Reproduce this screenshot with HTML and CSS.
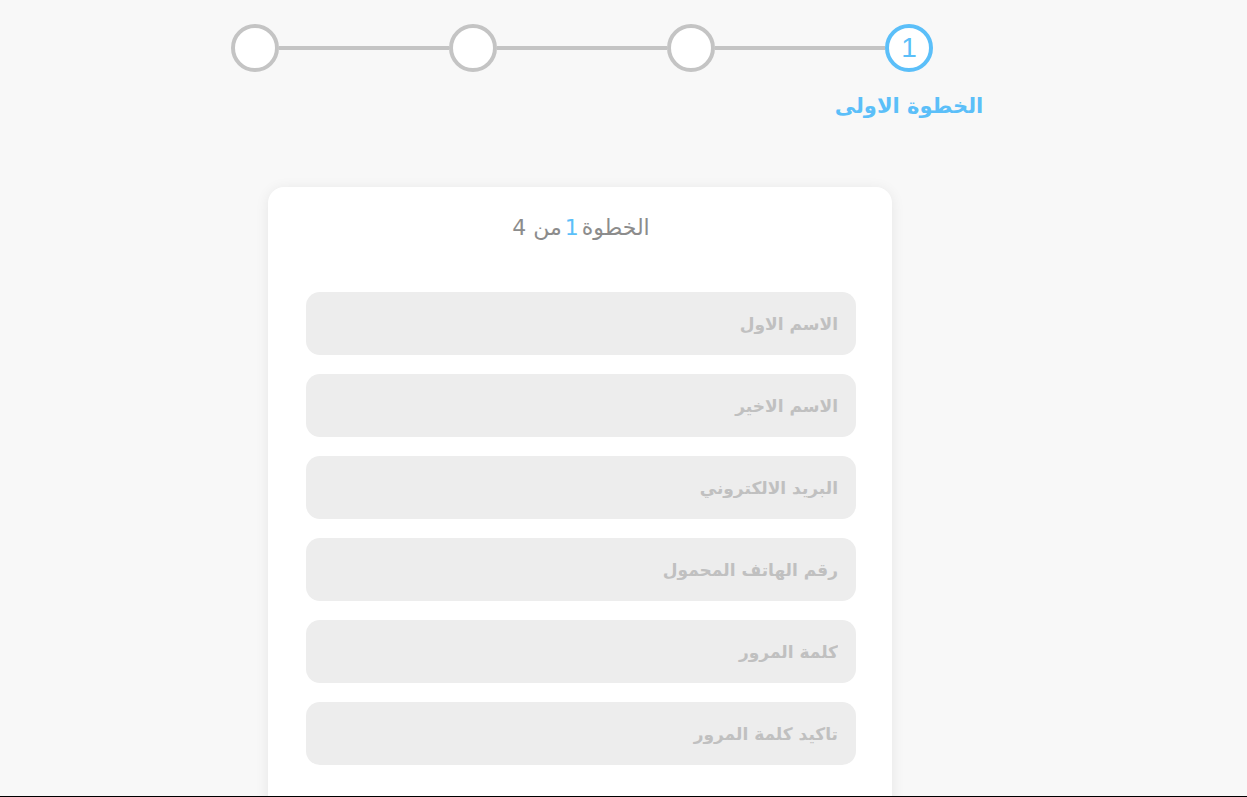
FILE: index.html
```html
<!DOCTYPE html>
<html lang="ar" dir="rtl">
<head>
<meta charset="utf-8">
<title>التسجيل</title>
<link rel="stylesheet" href="styles.css">
</head>
<body>
<div class="page">
  <div class="stepper">
    <div class="step active">
      <div class="circle">1</div>
      <div class="step-label">الخطوة الاولى</div>
    </div>
    <div class="line"></div>
    <div class="step"><div class="circle"></div></div>
    <div class="line"></div>
    <div class="step"><div class="circle"></div></div>
    <div class="line"></div>
    <div class="step"><div class="circle"></div></div>
  </div>

  <div class="card">
    <h2 class="card-title">الخطوة<span class="num">1</span>من 4</h2>
    <form class="form">
      <input class="field" type="text" placeholder="الاسم الاول">
      <input class="field" type="text" placeholder="الاسم الاخير">
      <input class="field" type="email" placeholder="البريد الالكتروني">
      <input class="field" type="tel" placeholder="رقم الهاتف المحمول">
      <input class="field" type="password" placeholder="كلمة المرور">
      <input class="field" type="password" placeholder="تاكيد كلمة المرور">
    </form>
  </div>
</div>
</body>
</html>
```

FILE: styles.css
```css
* { box-sizing: border-box; }
html, body {
  margin: 0;
  padding: 0;
}
body {
  background: #f8f8f8;
  font-family: "DejaVu Sans", "Noto Sans", sans-serif;
  height: 797px;
  overflow: hidden;
  border-bottom: 1px solid #000;
}
.page {
  display: flex;
  flex-direction: column;
  align-items: center;
  margin-right: 87px;
  padding-top: 24px;
}
.stepper {
  display: flex;
  align-items: flex-start;
  width: 702px;
  margin-left: 4px;
}
.step {
  width: 48px;
  display: flex;
  flex-direction: column;
  align-items: center;
  flex: none;
}
.circle {
  width: 48px;
  height: 48px;
  border-radius: 50%;
  border: 4px solid #c4c4c4;
  background: #fff;
  display: flex;
  align-items: center;
  justify-content: center;
  font-family: "Liberation Sans", sans-serif;
  font-size: 28px;
  color: #5bbff9;
}
.step.active .circle {
  border-color: #5bbff9;
}
.line {
  flex: 1;
  height: 4px;
  background: #c4c4c4;
  margin-top: 22px;
}
.step-label {
  white-space: nowrap;
  margin-top: 22px;
  font-size: 21px;
  font-weight: bold;
  color: #5bbff9;
  line-height: 24px;
}
.card {
  margin-top: 69px;
  width: 624px;
  background: #fff;
  border-radius: 16px 16px 0 0;
  box-shadow: 0 2px 14px rgba(0, 0, 0, 0.08);
  padding: 25px 36px 40px 38px;
}
.card-title {
  margin: 0;
  text-align: center;
  font-weight: normal;
  font-size: 22px;
  line-height: 32px;
  color: #8c8c8c;
}
.card-title .num {
  color: #5bbff9;
  margin: 0 3px;
}
.form {
  margin-top: 48px;
  display: flex;
  flex-direction: column;
  gap: 19px;
}
.field {
  width: 100%;
  height: 63px;
  border: none;
  outline: none;
  border-radius: 14px;
  background: #ededed;
  padding: 0 18px;
  font-family: "DejaVu Sans", sans-serif;
  font-size: 17px;
  font-weight: bold;
  color: #555;
  text-align: right;
  direction: rtl;
}
.field::placeholder {
  color: #c0c0c0;
}
```
